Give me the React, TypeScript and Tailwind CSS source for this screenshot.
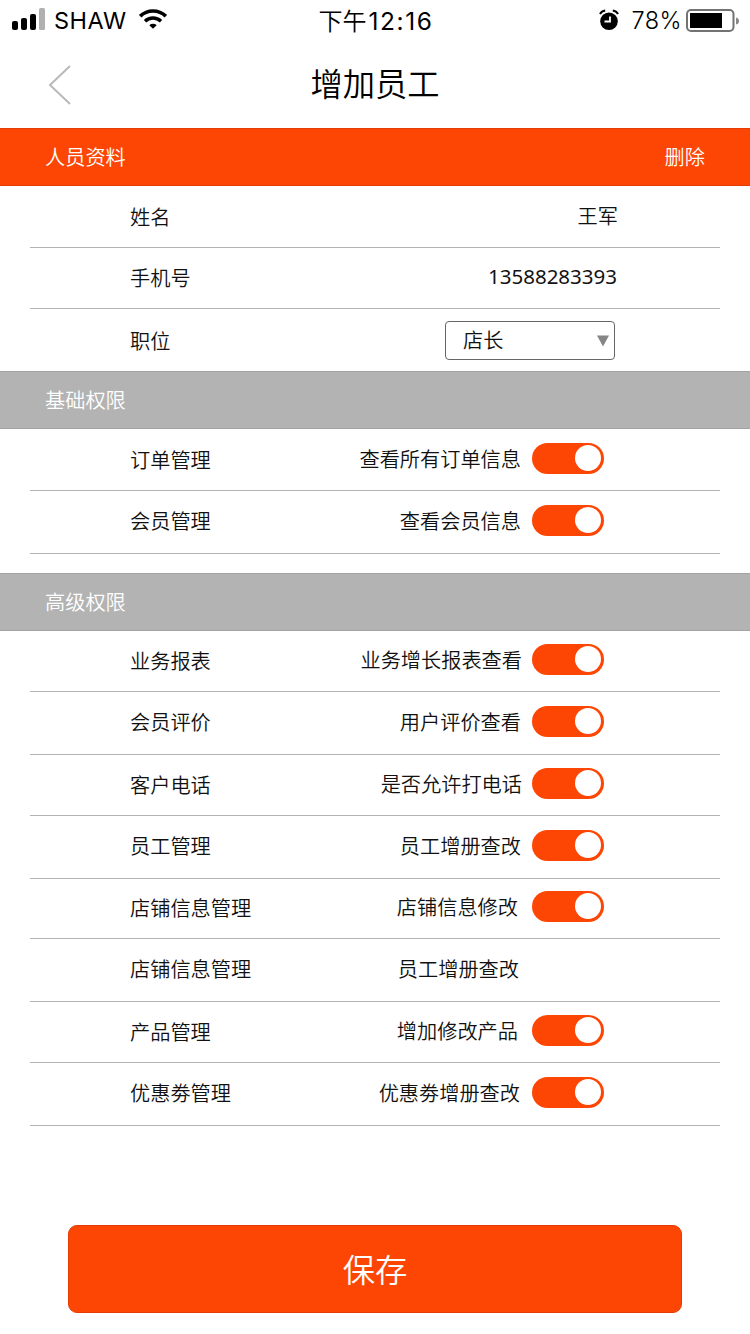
import React from "react";

type Row = {
  label: string;
  desc: string;
  on: boolean;
  height: string;
  labelTop: string;
  descTop: string;
  descEnd: string;
  toggleTop: string;
};

const basicRows: Row[] = [
  { label: "订单管理", desc: "查看所有订单信息", on: true, height: "h-[62px]", labelTop: "mt-[21px]", descTop: "mt-[20px]", descEnd: "mr-[11px]", toggleTop: "mt-[14px]" },
  { label: "会员管理", desc: "查看会员信息", on: true, height: "h-[63px]", labelTop: "mt-[20px]", descTop: "mt-[20px]", descEnd: "mr-[11px]", toggleTop: "mt-[14px]" },
];

const advancedRows: Row[] = [
  { label: "业务报表", desc: "业务增长报表查看", on: true, height: "h-[61px]", labelTop: "mt-[20px]", descTop: "mt-[19px]", descEnd: "mr-[10px]", toggleTop: "mt-[13px]" },
  { label: "会员评价", desc: "用户评价查看", on: true, height: "h-[63px]", labelTop: "mt-[20px]", descTop: "mt-[20px]", descEnd: "mr-[11px]", toggleTop: "mt-[14px]" },
  { label: "客户电话", desc: "是否允许打电话", on: true, height: "h-[61px]", labelTop: "mt-[20px]", descTop: "mt-[19px]", descEnd: "mr-[10px]", toggleTop: "mt-[13px]" },
  { label: "员工管理", desc: "员工增册查改", on: true, height: "h-[63px]", labelTop: "mt-[20px]", descTop: "mt-[20px]", descEnd: "mr-[11px]", toggleTop: "mt-[14px]" },
  { label: "店铺信息管理", desc: "店铺信息修改", on: true, height: "h-[60px]", labelTop: "mt-[19px]", descTop: "mt-[18px]", descEnd: "mr-[14px]", toggleTop: "mt-[12px]" },
  { label: "店铺信息管理", desc: "员工增册查改", on: false, height: "h-[63px]", labelTop: "mt-[20px]", descTop: "mt-[20px]", descEnd: "mr-[13px]", toggleTop: "mt-[14px]" },
  { label: "产品管理", desc: "增加修改产品", on: true, height: "h-[61px]", labelTop: "mt-[20px]", descTop: "mt-[19px]", descEnd: "mr-[14px]", toggleTop: "mt-[13px]" },
  { label: "优惠劵管理", desc: "优惠劵增册查改", on: true, height: "h-[63px]", labelTop: "mt-[20px]", descTop: "mt-[20px]", descEnd: "mr-[12px]", toggleTop: "mt-[14px]" },
];

function Toggle({ className }: { className: string }) {
  return (
    <div className={`flex h-[31px] w-[72px] shrink-0 items-start justify-end rounded-full bg-[#fd4603] pt-[2px] pr-[3px] ${className}`}>
      <div className="size-[26px] rounded-full bg-white" />
    </div>
  );
}

function PermissionRow({ row }: { row: Row }) {
  return (
    <div className={`mx-[30px] flex items-start border-b border-[#b3b3b3] pr-[116px] pl-[100px] ${row.height}`}>
      <span className={row.labelTop}>{row.label}</span>
      <span className={`ml-auto ${row.descTop} ${row.descEnd}`}>{row.desc}</span>
      {row.on ? <Toggle className={row.toggleTop} /> : <div className="w-[72px]" />}
    </div>
  );
}

function SectionTitle({ children }: { children: React.ReactNode }) {
  return (
    <div className="flex h-[58px] items-center border-y border-[#a3a3a3] bg-[#b3b3b3] pl-[45px] text-white">
      {children}
    </div>
  );
}

function StatusBar() {
  return (
    <header className="flex h-[42px] items-center text-black">
      <div className="flex w-[250px] items-center pb-[2px] pl-[12px]">
        <svg width="34" height="24" viewBox="0 0 34 24" className="shrink-0">
          <rect x="0" y="13" width="6" height="9" rx="2" />
          <rect x="9" y="10" width="6" height="12" rx="2" />
          <rect x="18" y="6" width="6" height="16" rx="2" />
          <rect x="27" y="0" width="6" height="22" rx="1.5" fill="#b0b0b0" />
        </svg>
        <span className="ml-[8px] pt-[1px] text-[23.5px] leading-6 font-normal tracking-[0.5px] [font-family:Inter,'Liberation_Sans',sans-serif]">SHAW</span>
        <svg width="28" height="20" viewBox="0 0 28 20" className="mb-[3px] ml-[12px] shrink-0" fill="none" stroke="#000">
          <path d="M1.2 7.2A18.5 18.5 0 0 1 26.8 7.2" strokeWidth="3.6" />
          <path d="M6 12.2A11.5 11.5 0 0 1 22 12.2" strokeWidth="3.4" />
          <path d="M10.3 16.3A5.5 5.5 0 0 1 17.7 16.3L14 19.8Z" fill="#000" stroke="none" />
        </svg>
      </div>
      <div className="flex w-[250px] items-center justify-center pl-[2px] text-[24px] leading-6">
        <span className="pb-[2px]">下午</span>
        <span className="ml-[2px] text-[24.5px] font-normal tracking-[1.6px] [font-family:Inter,'Liberation_Sans',sans-serif]">12:16</span>
      </div>
      <div className="flex w-[250px] items-center justify-end pr-[10px]">
        <svg width="20" height="22" viewBox="0 0 20 22" className="mr-[13px] mb-[2px] shrink-0" fill="none">
          <circle cx="10" cy="12.2" r="8.8" fill="#000" />
          <path d="M1 5Q2.6 2 6.2 1.4M19 5Q17.4 2 13.8 1.4" stroke="#000" strokeWidth="2" />
          <path d="M11 7.5V12.5H5.5" stroke="#fff" strokeWidth="1.8" />
        </svg>
        <span className="text-[23.5px] leading-6 font-light tracking-[0.4px] [font-family:Inter,'Liberation_Sans',sans-serif]">78%</span>
        <svg width="54" height="24" viewBox="0 0 54 24" className="ml-[4px] shrink-0" fill="none">
          <rect x="1" y="1" width="46.5" height="21" rx="4" stroke="#737373" strokeWidth="2" />
          <rect x="4" y="4" width="32" height="15" fill="#000" />
          <path d="M50 8.5Q53 9 53 12T50 15.5Z" fill="#888" />
        </svg>
      </div>
    </header>
  );
}

export default function App() {
  return (
    <main className="flex h-[1334px] w-[750px] flex-col overflow-hidden bg-white text-[20.2px] leading-[20px] font-[350] text-[#111] [font-family:'Noto_Sans_CJK_SC_DemiLight','Noto_Sans_CJK_SC',sans-serif]">
      <StatusBar />
      <div className="grid h-[86px] grid-cols-[1fr_auto_1fr] items-center">
        <svg width="24" height="42" viewBox="0 0 24 42" className="ml-[48px]" fill="none" stroke="#b9b9b9" strokeWidth="2">
          <path d="M22 2L2 21L22 40" />
        </svg>
        <h1 className="pb-[6px] text-[32.3px] leading-8 font-[350] text-black">增加员工</h1>
      </div>

      <div className="flex h-[58px] items-center justify-between border-y border-[#e43c04] bg-[#fd4603] pr-[45px] pl-[45px] text-white">
        <span>人员资料</span>
        <button>删除</button>
      </div>
      <div className="mx-[30px] flex h-[62px] items-center justify-between border-b border-[#b3b3b3] pr-[102px] pl-[100px]">
        <span>姓名</span>
        <span className="pb-[1px]">王军</span>
      </div>
      <div className="mx-[30px] flex h-[61px] items-center justify-between border-b border-[#b3b3b3] pr-[103px] pl-[100px]">
        <span>手机号</span>
        <span className="pb-[5px] text-[20.5px] font-normal [font-family:'Noto_Sans','Open_Sans',sans-serif]">13588283393</span>
      </div>
      <div className="mx-[30px] flex h-[62px] items-center justify-between pr-[105px] pl-[100px]">
        <span className="mt-[2px]">职位</span>
        <div className="flex h-[39px] w-[170px] items-center justify-between rounded-[4px] border border-[#666] pr-[5px] pl-[17px]">
          <span>店长</span>
          <svg width="12" height="12" viewBox="0 0 12 12" className="mt-[2px]">
            <path d="M0 0.5H12L6 11.5Z" fill="#858585" />
          </svg>
        </div>
      </div>

      <SectionTitle>基础权限</SectionTitle>
      {basicRows.map((row, i) => (
        <PermissionRow key={i} row={row} />
      ))}
      <div className="h-[19px]" />
      <SectionTitle>高级权限</SectionTitle>
      {advancedRows.map((row, i) => (
        <PermissionRow key={i} row={row} />
      ))}

      <button className="mx-[68px] mt-[99px] h-[88px] rounded-[9px] border border-[#e43c04] bg-[#fd4603] pb-[3px] text-[32.3px] leading-8 font-[350] text-white">
        保存
      </button>
    </main>
  );
}
